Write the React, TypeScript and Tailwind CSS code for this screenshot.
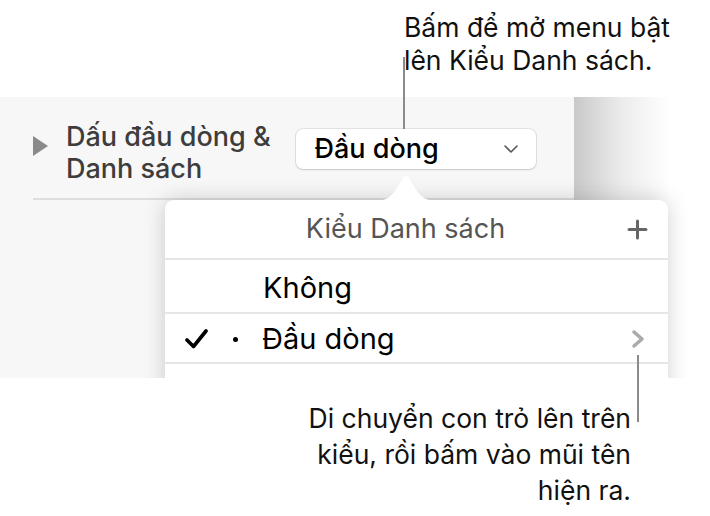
import { Plus } from "lucide-react";

const font = "font-['Inter','Noto_Sans',sans-serif]";

const Check = () => (
  <svg width="24" height="20" viewBox="0 0 24 20" fill="none">
    <path d="M2 11 L8.5 17.5 L21 2" stroke="#000" strokeWidth="3.6" strokeLinecap="round" strokeLinejoin="round" />
  </svg>
);

const ChevronRight = () => (
  <svg width="16" height="20" viewBox="0 0 16 20" fill="none">
    <path d="M4 3 L12 10 L4 17" stroke="#aaaaaa" strokeWidth="3.5" strokeLinecap="round" strokeLinejoin="round" />
  </svg>
);

const ChevronDown = () => (
  <svg width="16" height="10" viewBox="0 0 16 10" fill="none">
    <path d="M2 2 L8 8 L14 2" stroke="#555" strokeWidth="1.6" strokeLinecap="round" strokeLinejoin="round" />
  </svg>
);

const ListPopover = () => (
  <div className="absolute left-[165px] top-[103px] w-[503px] h-[260px] bg-white rounded-t-[9px] shadow-[0_0_22px_rgba(0,0,0,0.18)]">
    {/* arrow pointing to the button */}
    <svg
      className="absolute left-[208px] top-[-25px]"
      width="66"
      height="26"
      viewBox="0 0 66 26"
      fill="none"
    >
      <path d="M0 26 C14 26 18 22 24 13 L30 3 C31.5 0.5 34.5 0.5 36 3 L42 13 C48 22 52 26 66 26 Z" fill="#fff" />
    </svg>
    <div className="relative flex items-center justify-center h-[60px] border-b-2 border-[#e6e6e6]">
      <span className="text-[27px] text-[#555] pr-[22px]">Kiểu Danh sách</span>
      <Plus className="absolute right-[16px] top-[15px] text-[#666]" size={29} strokeWidth={3} absoluteStrokeWidth />
    </div>
    <div className="flex items-center h-[54px] border-b-2 border-[#e6e6e6] pl-[98px] pt-[4px] text-[29px] text-black">
      Không
    </div>
    <div className="flex items-center h-[50px] border-b-2 border-[#e6e6e6] pt-[2px] text-[29px] text-black">
      <div className="w-[20px]" />
      <Check />
      <div className="ml-[24px] w-[5px] h-[5px] rounded-full bg-black" />
      <span className="ml-[24px] flex-1">Đầu dòng</span>
      <div className="mr-[22px]">
        <ChevronRight />
      </div>
    </div>
  </div>
);

export default function App() {
  return (
    <div className={`relative w-[710px] h-[516px] bg-white overflow-hidden ${font}`}>
      <div className="h-[97px] pl-[404px] pt-[11px] text-[26.5px] leading-[33px] text-[#111]">
        Bấm để mở menu bật
        <br />
        lên Kiểu Danh sách.
      </div>

      <div className="relative flex h-[281px] overflow-hidden">
        <div className="w-[574px] bg-[#f7f7f7] pl-[33px] pt-[24px]">
          <div className="flex items-start">
            <svg className="mt-[15px] shrink-0" width="15" height="20" viewBox="0 0 15 20">
              <path d="M0 0 L15 10 L0 20 Z" fill="#8a8a8a" />
            </svg>
            <div className="ml-[18px] text-[27px] leading-[32px] font-medium text-[#3d3d3d] whitespace-nowrap">
              Dấu đầu dòng &amp;
              <br />
              Danh sách
            </div>
            <div className="ml-[25px] mt-[8px] shrink-0 flex items-center justify-between w-[240px] h-[40px] bg-white rounded-[7px] shadow-[0_0_0_1px_rgba(0,0,0,0.08),0_1px_2px_rgba(0,0,0,0.12)] pl-[19px] pr-[17px]">
              <span className="text-[27px] font-medium text-black">Đầu dòng</span>
              <ChevronDown />
            </div>
          </div>
          <div className="mt-[13px] h-[2px] bg-[#dedede]" />
        </div>
        <div className="w-[96px] bg-gradient-to-r from-[#c9c9c9] via-[#ececec] to-white" />
        <ListPopover />
      </div>

      <div className="pt-[22px] pr-[79px] text-right text-[26.5px] leading-[36px] text-[#111]">
        Di chuyển con trỏ lên trên
        <br />
        kiểu, rồi bấm vào mũi tên
        <br />
        hiện ra.
      </div>

      {/* callout lines */}
      <div className="absolute left-[403px] top-[57px] w-[2px] h-[72px] bg-[#8a8a8a]" />
      <div className="absolute left-[637px] top-[355px] w-[2px] h-[67px] bg-[#8a8a8a]" />
    </div>
  );
}
